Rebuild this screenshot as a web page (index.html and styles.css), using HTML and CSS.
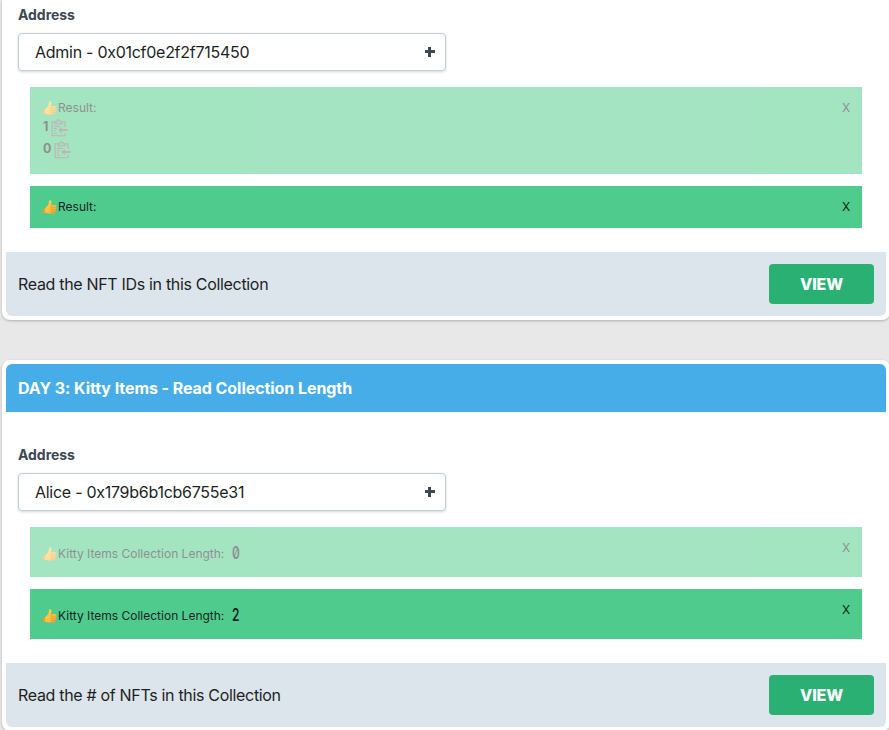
FILE: index.html
```
<!DOCTYPE html>
<html lang="en">
<head>
<meta charset="utf-8">
<title>Kitty Items</title>
<link rel="stylesheet" href="styles.css">
</head>
<body>
<svg class="defs" width="0" height="0" aria-hidden="true">
  <defs>
    <linearGradient id="skin" x1="0" y1="0" x2="1" y2="1"><stop offset="0" stop-color="#ffd85a"/><stop offset=".65" stop-color="#ffba3a"/><stop offset="1" stop-color="#f09a2c"/></linearGradient>
    <symbol id="thumb" viewBox="0 0 14 14">
      <path fill="#f39a2d" d="M0 9.4 3.6 7.6 5 13 .4 13Z"/>
      <path fill="url(#skin)" d="M2.6 8.2C4.6 6.8 5.6 5.4 6.2 3.6L6.5 1C6.7 0 8.6 0 8.9 1.6 9.1 3 8.8 4 8.5 5L12.6 5C14.1 5.1 14.1 7 13.2 7.2 14.2 7.6 14.1 9.2 13.2 9.5 13.9 10 13.5 11.5 12.7 11.6 13.1 12.6 12.4 13.4 11.2 13.4L6 13.4C4.6 13.4 4 13.2 2.6 12.8Z"/>
      <path fill="none" stroke="#dc8a30" stroke-width=".5" d="M9.2 7.3H13.2M9.2 9.5H13.2M9.2 11.6H12.7M9.2 5.2C8.6 7 8.6 12 9.2 13"/>
    </symbol>
    <symbol id="clip" viewBox="0 0 17 18">
      <path fill="none" stroke="currentColor" stroke-width="1.1" d="M4.5 2.8H1.1V16.8H14V14M14 8V2.8H10.7M4 4.7V3H5.8C5.8.2 9.3.2 9.3 3H11.2V4.7ZM3 7.4H9M3 9.6H5.8M3 11.7H4.6M3 14.2H6"/>
      <path fill="currentColor" d="M7.2 11 10.8 7.7V10.1H16.6V12H10.8V14.4Z"/>
    </symbol>
  </defs>
</svg>
<main class="page">
  <section class="card card-cut">
    <div class="body">
      <div class="label">Address</div>
      <div class="select"><span>Admin - 0x01cf0e2f2f715450</span><i class="plus"></i></div>
      <div class="results">
        <div class="result list faded">
          <div>
            <div class="line"><svg class="thumb"><use href="#thumb"/></svg>Result:</div>
            <div class="item"><b>1</b><svg class="clip"><use href="#clip"/></svg></div>
            <div class="item"><b>0</b><svg class="clip"><use href="#clip"/></svg></div>
          </div>
          <span class="close">X</span>
        </div>
        <div class="result">
          <div class="line"><svg class="thumb"><use href="#thumb"/></svg>Result:</div>
          <span class="close">X</span>
        </div>
      </div>
    </div>
    <footer class="foot"><span>Read the NFT IDs in this Collection</span><button class="view">VIEW</button></footer>
  </section>
  <section class="card">
    <header class="head">DAY 3: Kitty Items - Read Collection Length</header>
    <div class="body">
      <div class="label">Address</div>
      <div class="select"><span>Alice - 0x179b6b1cb6755e31</span><i class="plus"></i></div>
      <div class="results">
        <div class="result count faded">
          <div class="line"><svg class="thumb"><use href="#thumb"/></svg>Kitty Items Collection Length: <span class="num">0</span></div>
          <span class="close">X</span>
        </div>
        <div class="result count">
          <div class="line"><svg class="thumb"><use href="#thumb"/></svg>Kitty Items Collection Length: <span class="num">2</span></div>
          <span class="close">X</span>
        </div>
      </div>
    </div>
    <footer class="foot"><span>Read the # of NFTs in this Collection</span><button class="view">VIEW</button></footer>
  </section>
</main>
</body>
</html>
```
FILE: styles.css
```
* { box-sizing: border-box; }
html { overflow: hidden; background: #e8e8e8; }
body { margin: 0; height: 730px; overflow: hidden; font: 16px/24px Inter, "Liberation Sans", sans-serif; color: #1c1f24; background: #e8e8e8; }
.defs { display: block; }
.page { width: 888px; height: 730px; overflow: visible; margin-left: 2px; }
.card { border: 4px solid #fff; border-radius: 8px; background: #fff; margin-bottom: 40px; box-shadow: 0 1px 3px rgba(0,0,0,.18), 0 1px 2px rgba(0,0,0,.08); }
.card:last-child { margin-bottom: 0; }
.card-cut { border-top: 0; border-top-left-radius: 0; border-top-right-radius: 0; }
.head { height: 48px; padding: 12px; background: #47ade8; color: #fff; font-weight: 700; border-radius: 6px 6px 0 0; letter-spacing: -.06px; }
.body { padding: 31px 12px 24px; }
.card-cut .body { padding-top: 3px; }
.label { height: 24px; font-size: 14px; font-weight: 700; color: #3d4852; letter-spacing: -.05px; }
.select { display: flex; align-items: center; justify-content: space-between; width: 428px; height: 38px; margin-top: 6px; padding: 0 10px 0 16px; border: 1px solid #bccddc; border-radius: 4px; background: #fff; box-shadow: 0 1px 3px rgba(0,0,0,.16); letter-spacing: -.27px; }
.plus { width: 10px; height: 10px; background: linear-gradient(#3d4852,#3d4852) 50% 50%/3.4px 10px no-repeat, linear-gradient(#3d4852,#3d4852) 50% 50%/10px 3.4px no-repeat; }
.results { display: flex; flex-direction: column; gap: 12px; padding: 16px 12px 0; }
.result { display: flex; justify-content: space-between; align-items: flex-start; height: 42px; padding: 12px; background: #4fcb8d; font-size: 12px; line-height: 18px; }
.list { height: 87px; }
.count { height: 50px; }
.count .line { margin-top: 6px; }
.faded { opacity: .5; background: #4aca85; }
.line { display: flex; align-items: center; height: 18px; white-space: pre; }
.thumb { width: 15px; height: 14px; margin-right: 1px; }
.item { display: flex; align-items: center; height: 22px; }
.item b { padding-left: 1px; height: 20px; font-size: 12.5px; }
.clip { width: 17px; height: 18px; margin: -1px 0 0 3px; color: #84696f; }
.num { display: inline-block; margin: -3px -4px 0 4px; font-size: 17px; font-weight: 600; font-feature-settings: "zero"; transform: scaleX(.7); transform-origin: left; }
.close { width: 8px; }
.foot { display: flex; align-items: center; justify-content: space-between; height: 64px; padding: 0 12px; background: #dde5ec; border-radius: 0 0 6px 6px; letter-spacing: -.32px; }
.view { width: 105px; height: 40px; padding: 0; border: 0; border-radius: 4px; background: #2bb074; color: #fff; font: 800 16px/24px Inter, sans-serif; letter-spacing: -.2px; }
```
